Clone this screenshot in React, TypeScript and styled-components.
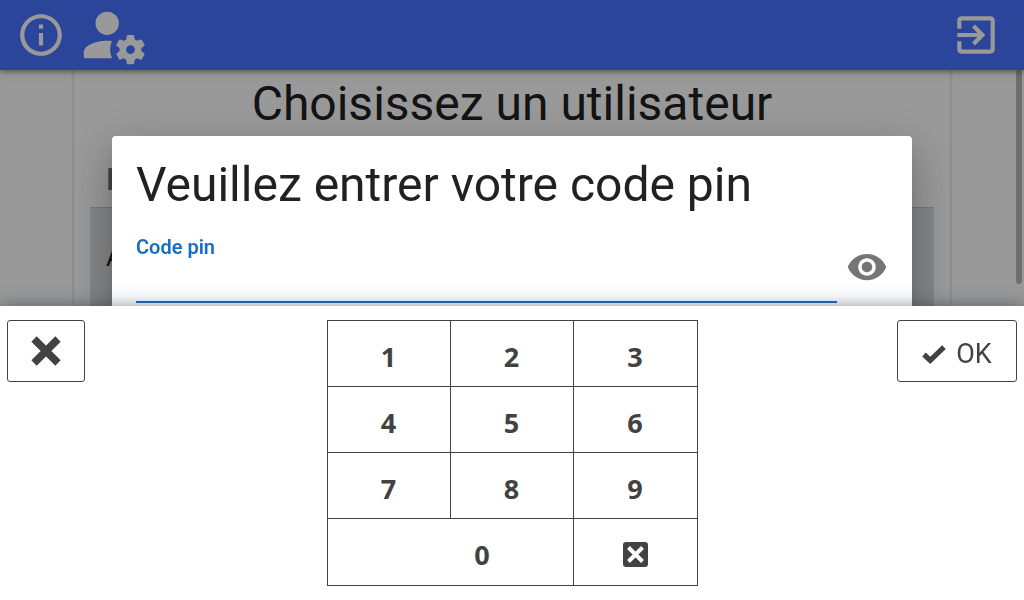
import React, { useState } from "react";
import styled, { createGlobalStyle } from "styled-components";
import { MdInfoOutline, MdExitToApp, MdVisibility } from "react-icons/md";

const GlobalStyle = createGlobalStyle`
  * { box-sizing: border-box; }
  html, body, #root { height: 100%; margin: 0; }
  body { font-family: Roboto, sans-serif; color: #212121; background: #fff; overflow: hidden; }
  button { font: inherit; color: inherit; cursor: pointer; }
`;

const Page = styled.div`
  height: 100%;
  display: flex;
  flex-direction: column;
`;

const Toolbar = styled.header`
  display: flex;
  align-items: center;
  flex: none;
  height: 70px;
  padding: 0 23px 0 16px;
  gap: 12px;
  background: #4774ff;
  box-shadow: 0 2px 4px rgba(0, 0, 0, 0.3), 0 4px 8px rgba(0, 0, 0, 0.12);
  z-index: 1;
`;

const ToolButton = styled.button<{ $end?: boolean }>`
  display: flex;
  padding: 0;
  border: 0;
  background: none;
  color: #fff;
  ${(p) => p.$end && "margin-left: auto;"}
`;

const Content = styled.main`
  position: relative;
  flex: 1;
  min-height: 0;
  overflow: hidden;
  padding: 0 74px;
`;

const ScrollThumb = styled.div`
  position: absolute;
  top: 0;
  right: 2px;
  width: 6px;
  height: 214px;
  border-radius: 3px;
  background: #b8b8b8;
`;

const UserCard = styled.section`
  height: 100%;
  padding: 0 16px;
  box-shadow: 0 0 3px rgba(0, 0, 0, 0.3);
`;

const Title = styled.h1`
  margin: 0;
  font-size: 48px;
  line-height: 68px;
  font-weight: 400;
  text-align: center;
`;

const Users = styled.table`
  width: 100%;
  border-collapse: collapse;
  text-align: left;
  th, td { padding: 0 16px; }
  th {
    height: 69px;
    padding-top: 14px;
    font-size: 32px;
    font-weight: 500;
    color: #6f7276;
  }
  td {
    height: 100px;
    border-top: 1px solid #c8c8c8;
    background: #dfe1e4;
    font-size: 26px;
  }
`;

const Scrim = styled.div`
  position: fixed;
  inset: 0;
  z-index: 2;
  display: flex;
  align-items: flex-start;
  justify-content: center;
  padding: 136px 112px 0;
  background: rgba(0, 0, 0, 0.4);
`;

const Dialog = styled.section`
  width: 100%;
  max-width: 800px;
  height: 240px;
  padding: 16px 24px 24px;
  border-radius: 4px;
  background: #fff;
  box-shadow: 0 11px 15px -7px rgba(0, 0, 0, 0.2), 0 24px 38px 3px rgba(0, 0, 0, 0.14),
    0 9px 46px 8px rgba(0, 0, 0, 0.12);
`;

const DialogTitle = styled.h2`
  margin: 0 0 19px;
  font-size: 48px;
  line-height: 66px;
  font-weight: 400;
`;

const PinRow = styled.div`
  display: flex;
  align-items: flex-start;
  gap: 9px;
`;

const PinField = styled.div`
  display: flex;
  flex: 1;
  flex-direction: column;
  label {
    font-size: 20px;
    line-height: 20px;
    font-weight: 600;
    color: #1a6dc4;
  }
  input {
    width: 100%;
    height: 46px;
    padding: 0;
    border: 0;
    border-bottom: 2px solid #1a6dc4;
    outline: 0;
    font: 400 32px Roboto, sans-serif;
    background: none;
  }
`;

const RevealButton = styled.button`
  display: flex;
  margin-top: 9px;
  padding: 0;
  border: 0;
  background: none;
  color: #757575;
`;

const Keyboard = styled.section`
  position: fixed;
  inset: auto 0 0;
  z-index: 3;
  display: grid;
  grid-template-columns: 1fr auto 1fr;
  align-items: start;
  padding: 14px 7px;
  background: #fff;
  color: #424242;
  box-shadow: 0 0 16px rgba(20, 40, 66, 0.5);
`;

const ActionButton = styled.button<{ $wide?: boolean }>`
  display: flex;
  align-items: center;
  justify-content: center;
  gap: 10px;
  width: ${(p) => (p.$wide ? 120 : 78)}px;
  height: 62px;
  padding: ${(p) => (p.$wide ? 6 : 0)}px 0 0;
  border: 1px solid #424242;
  border-radius: 3px;
  background: #fff;
  justify-self: ${(p) => (p.$wide ? "end" : "start")};
  font-size: 27px;
`;

const Keypad = styled.div`
  display: grid;
  grid-template-columns: 122px 122px 123px;
  grid-template-rows: 65px 65px 65px 66px;
  gap: 1px;
  padding: 1px;
  background: #424242;
`;

const Key = styled.button<{ $zero?: boolean }>`
  display: flex;
  align-items: center;
  justify-content: center;
  padding: 5px 0 0;
  border: 0;
  background: #fff;
  font: 700 27px "Open Sans", sans-serif;
  ${(p) => p.$zero && "grid-column: span 2; padding-left: 64px;"}
`;

const UserCog = () => (
  <svg width="70" height="70" viewBox="0 0 24 24" fill="currentColor" aria-hidden="true">
    <path d="M10 4A4 4 0 0 0 6 8A4 4 0 0 0 10 12A4 4 0 0 0 14 8A4 4 0 0 0 10 4M10 14C5.580 14 2 15.790 2 18V20H11.680A7 7 0 0 1 11 17A7 7 0 0 1 11.640 14.090C11.110 14.030 10.560 14 10 14" />
    <path
      fillRule="evenodd"
      d="M17 12C16.870 12 16.760 12.090 16.740 12.210L16.550 13.530C16.250 13.660 15.960 13.820 15.700 14L14.460 13.500C14.350 13.500 14.220 13.500 14.150 13.630L13.150 15.360C13.090 15.470 13.110 15.600 13.210 15.680L14.270 16.500C14.250 16.670 14.240 16.830 14.240 17C14.240 17.170 14.250 17.330 14.270 17.500L13.210 18.320C13.120 18.400 13.090 18.530 13.150 18.640L14.150 20.370C14.210 20.500 14.340 20.500 14.460 20.500L15.700 20C15.960 20.180 16.240 20.350 16.550 20.470L16.740 21.790C16.760 21.910 16.860 22 17 22H19C19.110 22 19.220 21.910 19.240 21.790L19.430 20.470C19.730 20.340 20 20.180 20.270 20L21.500 20.500C21.630 20.500 21.760 20.500 21.830 20.370L22.830 18.640C22.890 18.530 22.860 18.400 22.770 18.320L21.700 17.500C21.720 17.330 21.740 17.170 21.740 17C21.740 16.830 21.730 16.670 21.700 16.500L22.760 15.680C22.850 15.600 22.880 15.470 22.820 15.360L21.820 13.630C21.760 13.500 21.630 13.500 21.500 13.500L20.270 14C20 13.820 19.730 13.650 19.420 13.530L19.230 12.210C19.220 12.090 19.110 12 19 12H17M18 15.500A1.500 1.500 0 1 1 18 18.500A1.500 1.500 0 1 1 18 15.500"
    />
  </svg>
);

const Cross = () => (
  <svg width="30" height="30" viewBox="0 0 30 30" aria-hidden="true">
    <path d="M3 3 27 27M27 3 3 27" stroke="currentColor" strokeWidth="7.500" />
  </svg>
);

const Check = () => (
  <svg width="24" height="19" viewBox="0 0 24 19" aria-hidden="true">
    <path d="M2 9.500 8.200 15.400 22 2.200" fill="none" stroke="currentColor" strokeWidth="5.200" />
  </svg>
);

const Erase = () => (
  <svg width="25" height="25" viewBox="0 0 25 25" aria-hidden="true">
    <rect width="25" height="25" rx="3" fill="currentColor" />
    <path d="M5.500 5.500 19.500 19.500M19.500 5.500 5.500 19.500" stroke="#fff" strokeWidth="4" />
  </svg>
);

export default function App() {
  const [pin, setPin] = useState("");
  const [shown, setShown] = useState(false);
  return (
    <>
      <GlobalStyle />
      <Page>
        <Toolbar>
          <ToolButton aria-label="Informations"><MdInfoOutline size={50} /></ToolButton>
          <ToolButton aria-label="Gestion des utilisateurs"><UserCog /></ToolButton>
          <ToolButton $end aria-label="Quitter"><MdExitToApp size={50} /></ToolButton>
        </Toolbar>
        <Content>
          <UserCard>
            <Title>Choisissez un utilisateur</Title>
            <Users>
              <thead><tr><th>E</th></tr></thead>
              <tbody><tr><td>A</td></tr></tbody>
            </Users>
          </UserCard>
          <ScrollThumb />
        </Content>
      </Page>
      <Scrim>
        <Dialog role="dialog" aria-labelledby="pin-title">
          <DialogTitle id="pin-title">Veuillez entrer votre code pin</DialogTitle>
          <PinRow>
            <PinField>
              <label htmlFor="pin">Code pin</label>
              <input id="pin" type={shown ? "text" : "password"} value={pin} onChange={(e) => setPin(e.target.value)} />
            </PinField>
            <RevealButton aria-label="Afficher le code" onClick={() => setShown(!shown)}>
              <MdVisibility size={42} />
            </RevealButton>
          </PinRow>
        </Dialog>
      </Scrim>
      <Keyboard aria-label="Clavier">
        <ActionButton aria-label="Fermer"><Cross /></ActionButton>
        <Keypad>
          {["1", "2", "3", "4", "5", "6", "7", "8", "9", "0"].map((n) => (
            <Key key={n} $zero={n === "0"} onClick={() => setPin(pin + n)}>{n}</Key>
          ))}
          <Key aria-label="Effacer" onClick={() => setPin(pin.slice(0, -1))}><Erase /></Key>
        </Keypad>
        <ActionButton $wide><Check />OK</ActionButton>
      </Keyboard>
    </>
  );
}
